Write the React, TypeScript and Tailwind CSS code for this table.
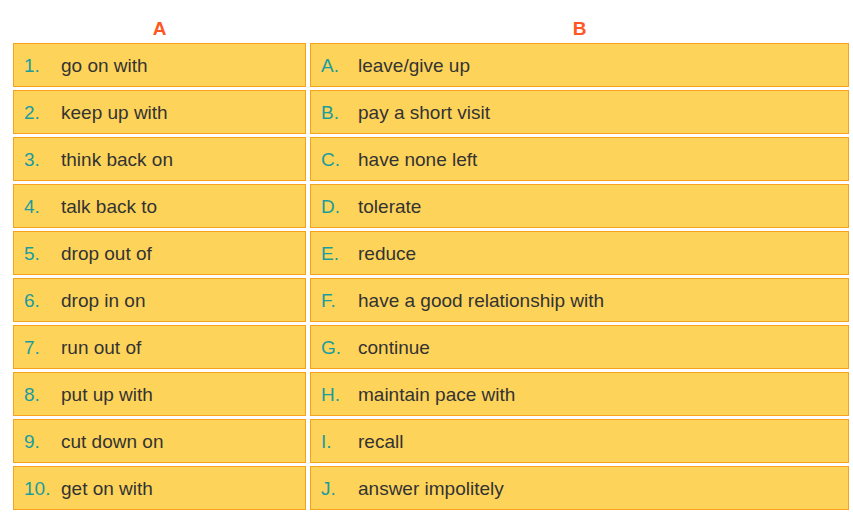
import React from "react";

const left = [
  "go on with",
  "keep up with",
  "think back on",
  "talk back to",
  "drop out of",
  "drop in on",
  "run out of",
  "put up with",
  "cut down on",
  "get on with",
];
const right = [
  "leave/give up",
  "pay a short visit",
  "have none left",
  "tolerate",
  "reduce",
  "have a good relationship with",
  "continue",
  "maintain pace with",
  "recall",
  "answer impolitely",
];
const letters = ["A", "B", "C", "D", "E", "F", "G", "H", "I", "J"];

function Cell({ label, text }: { label: string; text: string }) {
  return (
    <div className="h-[44px] border border-[#F8A11A] bg-[#FED359] flex items-center pl-[10px] pt-[2px] text-[19px] text-[#333333]">
      <span className="w-[37px] shrink-0 text-[#1B9C9E]">{label}</span>
      <span>{text}</span>
    </div>
  );
}

export default function App() {
  return (
    <div
      className="w-[853px] h-[514px] bg-white pt-[17px] pl-[13px]"
      style={{ fontFamily: '"Liberation Sans", Arial, sans-serif' }}
    >
      <div className="grid grid-cols-[293px_539px] gap-x-[4px] gap-y-[3px]">
        <div className="h-[23px] leading-[23px] text-center font-bold text-[19px] text-[#FF5722]">A</div>
        <div className="h-[23px] leading-[23px] text-center font-bold text-[19px] text-[#FF5722]">B</div>
        {left.map((l, i) => (
          <React.Fragment key={i}>
            <Cell label={`${i + 1}.`} text={l} />
            <Cell label={`${letters[i]}.`} text={right[i]} />
          </React.Fragment>
        ))}
      </div>
    </div>
  );
}
